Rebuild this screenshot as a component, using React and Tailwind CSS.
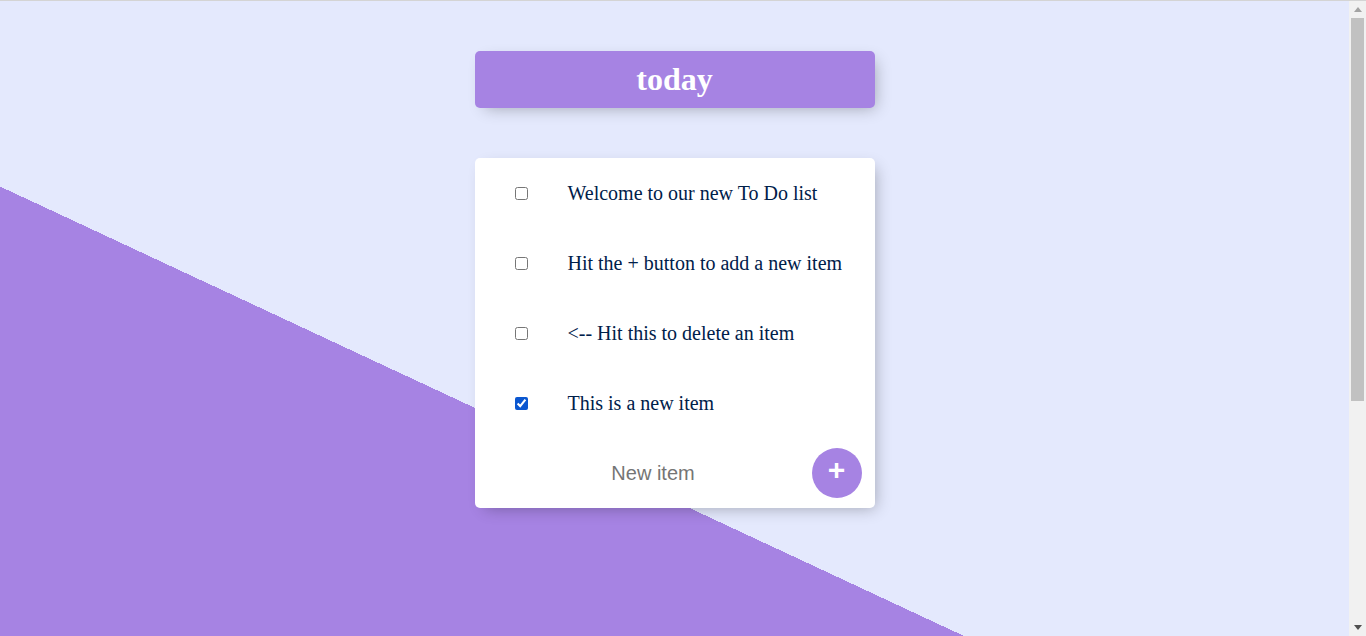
import { useState } from "react";

const initialItems = [
  { id: 1, text: "Welcome to our new To Do list", done: false },
  { id: 2, text: "Hit the + button to add a new item", done: false },
  { id: 3, text: "<-- Hit this to delete an item", done: false },
  { id: 4, text: "This is a new item", done: true },
];

function TodoItem({ item, onToggle }) {
  return (
    <div className="flex items-center min-h-[70px] pl-5">
      <input
        type="checkbox"
        checked={item.done}
        onChange={() => onToggle(item.id)}
        className="m-5 w-[13px] h-[13px] accent-[#0b57d0]"
      />
      <p className="m-0 p-5 text-[20px] leading-[23px] text-[#00204a] font-['Liberation_Serif',serif]">
        {item.text}
      </p>
    </div>
  );
}

function Scrollbar() {
  return (
    <aside className="w-[17px] shrink-0 bg-[#f1f1f1] flex flex-col">
      <div className="h-[17px] flex items-center justify-center">
        <svg width="8" height="5" viewBox="0 0 8 5">
          <path d="M0 5 L4 0 L8 5 Z" fill="#a3a3a3" />
        </svg>
      </div>
      <div className="flex-1 px-[2px]">
        <div className="h-[383px] bg-[#c1c1c1]" />
      </div>
      <div className="h-[17px] flex items-center justify-center">
        <svg width="8" height="5" viewBox="0 0 8 5">
          <path d="M0 0 L8 0 L4 5 Z" fill="#505050" />
        </svg>
      </div>
    </aside>
  );
}

export default function App() {
  const [items, setItems] = useState(initialItems);
  const [draft, setDraft] = useState("");

  const toggle = (id) =>
    setItems((list) => list.map((it) => (it.id === id ? { ...it, done: !it.done } : it)));

  const addItem = (event) => {
    event.preventDefault();
    if (!draft.trim()) return;
    setItems((list) => [...list, { id: Date.now(), text: draft, done: false }]);
    setDraft("");
  };

  return (
    <div className="h-[636px] flex overflow-hidden border-t border-[#d4d4d4]">
      <main className="flex-1 overflow-hidden">
        <div className="h-[1000px] pt-[50px] bg-[#E4E9FD] bg-[linear-gradient(25deg,#A683E3_50%,#E4E9FD_50%)] font-['Liberation_Serif',serif]">
          <div className="w-[400px] mx-auto bg-[#A683E3] rounded-[5px] text-center shadow-[5px_5px_15px_-5px_rgba(0,0,0,0.3)]">
            <h1 className="p-[10px] text-white text-[32px] leading-[37px] font-bold">today</h1>
          </div>

          <div className="w-[400px] mx-auto mt-[50px] bg-white rounded-[5px] shadow-[5px_5px_15px_-5px_rgba(0,0,0,0.3)]">
            {items.map((item) => (
              <TodoItem key={item.id} item={item} onToggle={toggle} />
            ))}
            <form onSubmit={addItem} className="flex items-center min-h-[70px] pl-5">
              <input
                type="text"
                value={draft}
                onChange={(event) => setDraft(event.target.value)}
                placeholder="New item"
                className="w-[317px] h-[60px] px-[2px] border-none outline-none text-center text-[20px] text-[#00204a] placeholder:text-[#757575] font-['Liberation_Sans',Arial,sans-serif]"
              />
              <button
                type="submit"
                className="w-[50px] h-[50px] rounded-full bg-[#A683E3] text-white text-[30px] font-bold leading-none pb-[6px] flex items-center justify-center font-['Liberation_Sans',Arial,sans-serif]"
              >
                +
              </button>
            </form>
          </div>
        </div>
      </main>
      <Scrollbar />
    </div>
  );
}
